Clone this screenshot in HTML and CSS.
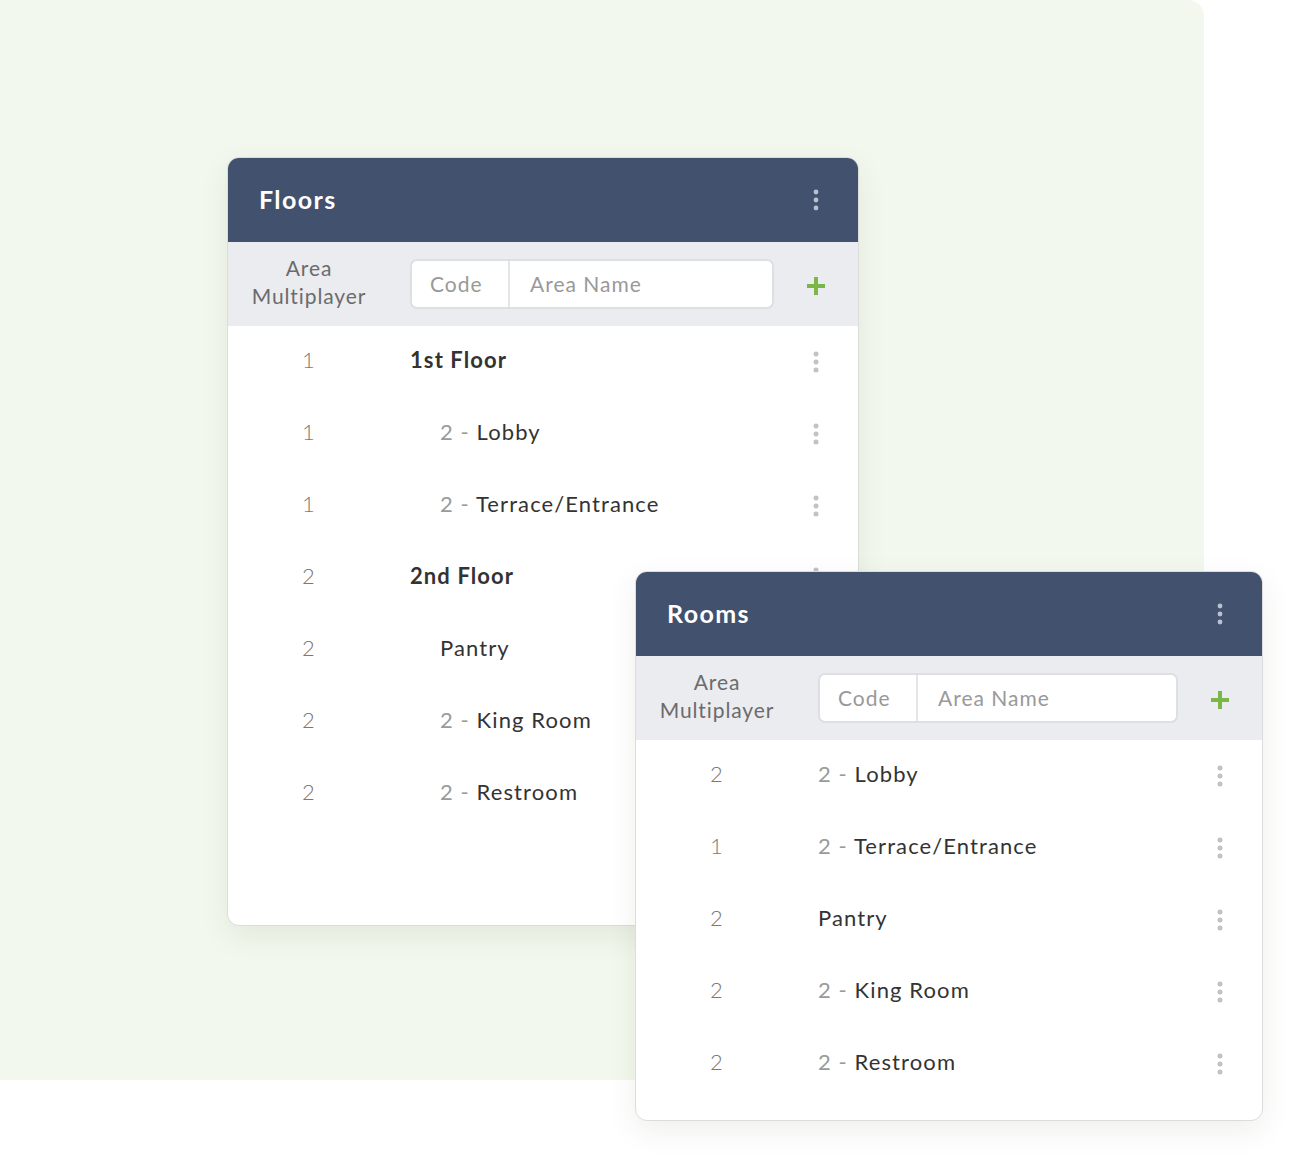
FILE: index.html
```html
<!DOCTYPE html>
<html lang="en">

<head>
    <title>Floors and Rooms</title>
    <link rel="stylesheet" href="styles.css">
</head>

<body>
    <div class="backdrop">
        <section class="panel floors">
            <header class="panel-head">
                <h2>Floors</h2>
                <svg class="kebab head-kebab" width="6" height="22" viewBox="0 0 6 22"><circle cx="3" cy="3" r="2.4"/><circle cx="3" cy="11" r="2.4"/><circle cx="3" cy="19" r="2.4"/></svg>
            </header>
            <div class="filter">
                <div class="filter-label">Area<br>Multiplayer</div>
                <div class="inputs">
                    <input class="code" type="text" placeholder="Code" />
                    <input class="name" type="text" placeholder="Area Name" />
                </div>
                <button class="add"><svg width="20" height="20" viewBox="0 0 20 20"><path d="M10 1v18M1 10h18"/></svg></button>
            </div>
            <ul class="rows">
                <li><span class="num">1</span><span class="title strong">1st Floor</span><svg class="kebab" width="6" height="22" viewBox="0 0 6 22"><circle cx="3" cy="3" r="2.5"/><circle cx="3" cy="11" r="2.5"/><circle cx="3" cy="19" r="2.5"/></svg></li>
                <li><span class="num">1</span><span class="title sub"><em>2 - </em>Lobby</span><svg class="kebab" width="6" height="22" viewBox="0 0 6 22"><circle cx="3" cy="3" r="2.5"/><circle cx="3" cy="11" r="2.5"/><circle cx="3" cy="19" r="2.5"/></svg></li>
                <li><span class="num">1</span><span class="title sub"><em>2 - </em>Terrace/Entrance</span><svg class="kebab" width="6" height="22" viewBox="0 0 6 22"><circle cx="3" cy="3" r="2.5"/><circle cx="3" cy="11" r="2.5"/><circle cx="3" cy="19" r="2.5"/></svg></li>
                <li><span class="num">2</span><span class="title strong">2nd Floor</span><svg class="kebab" width="6" height="22" viewBox="0 0 6 22"><circle cx="3" cy="3" r="2.5"/><circle cx="3" cy="11" r="2.5"/><circle cx="3" cy="19" r="2.5"/></svg></li>
                <li><span class="num">2</span><span class="title sub">Pantry</span><svg class="kebab" width="6" height="22" viewBox="0 0 6 22"><circle cx="3" cy="3" r="2.5"/><circle cx="3" cy="11" r="2.5"/><circle cx="3" cy="19" r="2.5"/></svg></li>
                <li><span class="num">2</span><span class="title sub"><em>2 - </em>King Room</span><svg class="kebab" width="6" height="22" viewBox="0 0 6 22"><circle cx="3" cy="3" r="2.5"/><circle cx="3" cy="11" r="2.5"/><circle cx="3" cy="19" r="2.5"/></svg></li>
                <li><span class="num">2</span><span class="title sub"><em>2 - </em>Restroom</span><svg class="kebab" width="6" height="22" viewBox="0 0 6 22"><circle cx="3" cy="3" r="2.5"/><circle cx="3" cy="11" r="2.5"/><circle cx="3" cy="19" r="2.5"/></svg></li>
            </ul>
        </section>
    </div>

    <section class="panel rooms">
        <header class="panel-head">
            <h2>Rooms</h2>
            <svg class="kebab head-kebab" width="6" height="22" viewBox="0 0 6 22"><circle cx="3" cy="3" r="2.4"/><circle cx="3" cy="11" r="2.4"/><circle cx="3" cy="19" r="2.4"/></svg>
        </header>
        <div class="filter">
            <div class="filter-label">Area<br>Multiplayer</div>
            <div class="inputs">
                <input class="code" type="text" placeholder="Code" />
                <input class="name" type="text" placeholder="Area Name" />
            </div>
            <button class="add"><svg width="20" height="20" viewBox="0 0 20 20"><path d="M10 1v18M1 10h18"/></svg></button>
        </div>
        <ul class="rows">
            <li><span class="num">2</span><span class="title"><em>2 - </em>Lobby</span><svg class="kebab" width="6" height="22" viewBox="0 0 6 22"><circle cx="3" cy="3" r="2.5"/><circle cx="3" cy="11" r="2.5"/><circle cx="3" cy="19" r="2.5"/></svg></li>
            <li><span class="num">1</span><span class="title"><em>2 - </em>Terrace/Entrance</span><svg class="kebab" width="6" height="22" viewBox="0 0 6 22"><circle cx="3" cy="3" r="2.5"/><circle cx="3" cy="11" r="2.5"/><circle cx="3" cy="19" r="2.5"/></svg></li>
            <li><span class="num">2</span><span class="title">Pantry</span><svg class="kebab" width="6" height="22" viewBox="0 0 6 22"><circle cx="3" cy="3" r="2.5"/><circle cx="3" cy="11" r="2.5"/><circle cx="3" cy="19" r="2.5"/></svg></li>
            <li><span class="num">2</span><span class="title"><em>2 - </em>King Room</span><svg class="kebab" width="6" height="22" viewBox="0 0 6 22"><circle cx="3" cy="3" r="2.5"/><circle cx="3" cy="11" r="2.5"/><circle cx="3" cy="19" r="2.5"/></svg></li>
            <li><span class="num">2</span><span class="title"><em>2 - </em>Restroom</span><svg class="kebab" width="6" height="22" viewBox="0 0 6 22"><circle cx="3" cy="3" r="2.5"/><circle cx="3" cy="11" r="2.5"/><circle cx="3" cy="19" r="2.5"/></svg></li>
        </ul>
    </section>
</body>

</html>
```

FILE: styles.css
```css
body {
    margin: 0;
    background: #ffffff;
    font-family: Lato, "Open Sans", sans-serif;
    position: relative;
    min-height: 1156px;
}

.backdrop {
    width: 1204px;
    height: 1080px;
    box-sizing: border-box;
    padding: 157px 0 0 227px;
    background: #f2f8ed;
    border-radius: 0 16px 16px 0;
}

.panel {
    background: #ffffff;
    border: 1px solid #dcdcdc;
    border-radius: 12px;
    overflow: hidden;
    box-shadow: 0 10px 30px rgba(40, 50, 30, 0.08);
    box-sizing: border-box;
}

.floors {
    width: 632px;
    height: 769px;
}

.rooms {
    position: absolute;
    left: 635px;
    top: 571px;
    width: 628px;
    height: 550px;
}

.panel-head {
    height: 84px;
    background: #42516e;
    display: grid;
    grid-template-columns: 1fr 84px;
    align-items: center;
    padding-left: 31px;
}

.panel-head h2 {
    margin: 0 0 2px;
    color: #ffffff;
    font-size: 25px;
    font-weight: 700;
    letter-spacing: 1.4px;
}

.kebab {
    justify-self: center;
    fill: #c2c2c2;
}

.head-kebab {
    fill: #b9c0cf;
}

.filter {
    height: 84px;
    background: #ebecf0;
    display: grid;
    grid-template-columns: 162px 1fr 84px;
    align-items: center;
}

.filter-label {
    text-align: center;
    color: #6b6b6b;
    font-size: 21px;
    line-height: 28px;
    letter-spacing: 0.9px;
    margin-bottom: 5px;
}

.inputs {
    margin-left: 20px;
    display: flex;
    height: 50px;
    box-sizing: border-box;
    border: 2px solid #dedfe2;
    border-radius: 7px;
    background: #ffffff;
    overflow: hidden;
}

.inputs input {
    box-sizing: border-box;
    border: none;
    outline: none;
    font-family: inherit;
    font-size: 21px;
    letter-spacing: 1px;
    color: #333;
    padding: 0 0 2px 18px;
    background: transparent;
    min-width: 0;
}

.inputs input::placeholder {
    color: #999999;
}

.inputs .code {
    width: 98px;
    flex: none;
    border-right: 2px solid #e4e5e8;
}

.inputs .name {
    flex: 1;
    padding-left: 20px;
}

.add {
    justify-self: center;
    background: none;
    border: none;
    padding: 0;
    margin-top: 3px;
    display: flex;
}

.add path {
    stroke: #7ab648;
    stroke-width: 4;
    fill: none;
}

.rows {
    list-style: none;
    margin: 0;
    padding: 0;
}

.rows li {
    height: 72px;
    box-sizing: border-box;
    padding-bottom: 5px;
    display: grid;
    grid-template-columns: 162px 1fr 84px;
    align-items: center;
    font-size: 22px;
    letter-spacing: 1.1px;
}

.num {
    text-align: center;
    color: #7a7a7a;
    font-weight: 300;
}

.title {
    margin-left: 20px;
    color: #333333;
}

.title.strong {
    font-weight: 700;
}

.title.sub {
    margin-left: 50px;
}

.title em {
    font-style: normal;
    color: #9a9a9a;
}

.rows .kebab {
    margin-top: 4px;
}
```
